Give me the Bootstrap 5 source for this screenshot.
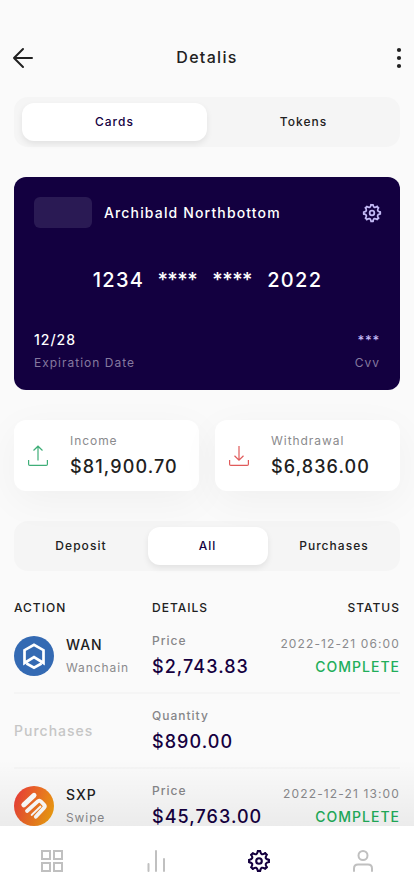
<!DOCTYPE html>
<html lang="en">
<head>
<meta charset="utf-8">
<meta name="viewport" content="width=device-width, initial-scale=1">
<title>Detalis</title>
<link href="https://cdn.jsdelivr.net/npm/bootstrap@5.3.0/dist/css/bootstrap.min.css" rel="stylesheet">
<style>
:root{--ink:#212121;--brand:#15003f;--muted-ink:#8a8a8d;--ok:#22ae5a}
body{font-family:Inter,"Liberation Sans",sans-serif;background:#fafafa;color:var(--ink);letter-spacing:1.1px;font-weight:500;overflow:hidden;height:896px}
.screen{height:826px;overflow:hidden;padding:38px 14px 0;position:relative}
.topbar{height:40px;margin:0 -2px 19px -2px}
.topbar h1{font-size:16px;line-height:20px;font-weight:500;letter-spacing:1.3px;padding-bottom:2px}
.topbar .side{width:24px;height:24px;line-height:0}
.seg{background:#f5f5f5;border-radius:14px;height:49.5px;margin-bottom:-.5px;padding:6px 4px 5px 8px}
.seg .nav-link{font-size:12px;line-height:15px;padding:11px 0 12px;color:var(--ink);border-radius:12px;height:38px;text-align:center;letter-spacing:1.05px}
.seg .nav-link.active{background:#fff;color:var(--brand);box-shadow:0 3px 6px rgba(0,0,0,.08)}
.seg-two{column-gap:4px;flex-wrap:nowrap}
.seg-three{margin-top:30px;padding-left:7px;padding-right:6px}
.seg-three .nav-link{width:120px}
.pay-card{background:#130040;border-radius:12px;height:213px;padding:20px 20px 19px;color:#fff;margin-top:31px}
.chip{width:58px;height:31px;border-radius:6px;background:#2a1a54}
.holder{font-size:14px;line-height:18px;letter-spacing:1.15px}
.card-gear{margin-right:-2px;color:#c3b9f5}
.digits{font-size:20px;line-height:24px;white-space:pre;margin-top:40px;padding-left:1px;letter-spacing:1.3px}
.digits span{letter-spacing:-.5px;margin-right:2px}
.foot-label{color:#85799f;font-weight:400;margin-top:6px}
.f14.stars{color:#c3b9f5;letter-spacing:.7px;font-size:13px}
.stats{margin-top:30px}
.stat{background:#fff;border-radius:12px;height:71px;padding:13px 14px 0;box-shadow:0 10px 40px rgba(0,0,0,.045);flex:1 1 0}
.stat svg{margin-top:12px;margin-right:22px}
.f12{font-size:12px;line-height:16px;letter-spacing:1px}
.f14{font-size:14px;line-height:18px;letter-spacing:1px}
.f18{font-size:18px;line-height:22px;letter-spacing:1.12px}
.stat .f18{margin-top:7px}
.soft{color:var(--muted-ink);font-weight:400}
.stat .soft{letter-spacing:.95px}
.list-head{margin-top:30px;margin-bottom:3px}
.tx{height:75px;border-bottom:2px solid #f5f5f5}
.col-a{width:138px}
.coin{margin-top:17px;margin-right:12px}
.coin-text{padding-top:17px}
.coin-text .f12{margin-top:6px;letter-spacing:.9px}
.amount{padding-top:14px}
.amount .soft{font-weight:500;color:#868689}
.amount .f18{margin-top:7px;letter-spacing:1.06px}
.when{padding-top:17px}
.when .f12{letter-spacing:1.13px}
.when .f14{margin-top:6px}
.ghost{padding-top:28px;color:#c6c6c6}
.ok{color:var(--ok)}
.brand{color:var(--brand)}
.fade-up{position:absolute;left:0;right:0;bottom:0;height:66px;background:linear-gradient(rgba(0,0,0,0),rgba(0,0,0,.06))}
.dock{height:70px;background:#fff;padding:23px 39px 0 40px}
.dock a{width:24px;height:24px;line-height:0}
</style>
</head>
<body>
<svg width="0" height="0" class="position-absolute">
<defs>
<path id="tooth" d="M-1.100-9.900H1.100C2-6.300 3.150-5.870 6.220-7.780"/>
<g id="gear" fill="none" stroke="currentColor" stroke-width="2.100" stroke-linecap="round">
<use href="#tooth"/><use href="#tooth" transform="rotate(45)"/><use href="#tooth" transform="rotate(90)"/><use href="#tooth" transform="rotate(135)"/><use href="#tooth" transform="rotate(180)"/><use href="#tooth" transform="rotate(225)"/><use href="#tooth" transform="rotate(270)"/><use href="#tooth" transform="rotate(315)"/>
<circle r="2.800"/>
</g>
</defs>
</svg>
<main class="screen">
<header class="topbar d-flex align-items-center justify-content-between">
<div class="side"><svg width="24" height="24" viewBox="0 0 24 24" fill="none" stroke="#212121" stroke-width="2" stroke-linecap="round" stroke-linejoin="round"><path d="M20 12H2M11 3L2 12l9 9"/></svg></div>
<h1 class="m-0">Detalis</h1>
<div class="side text-end"><svg width="6" height="24" viewBox="0 0 6 24" fill="#212121"><circle cx="3" cy="4" r="2.100"/><circle cx="3" cy="12" r="2.100"/><circle cx="3" cy="20" r="2.100"/></svg></div>
</header>
<nav class="seg seg-two nav nav-pills nav-justified">
<a class="nav-link active">Cards</a><a class="nav-link">Tokens</a>
</nav>
<section class="pay-card d-flex flex-column">
<div class="d-flex align-items-center">
<div class="chip me-2"></div><div class="holder ms-1">Archibald Northbottom</div>
<svg class="card-gear ms-auto" width="20" height="20" viewBox="-12 -12 24 24"><use href="#gear"/></svg>
</div>
<div class="digits text-center">1234  <span>****</span>  <span>****</span>  2022</div>
<div class="d-flex justify-content-between mt-auto">
<div><div class="f14">12/28</div><div class="f12 foot-label">Expiration Date</div></div>
<div class="text-end"><div class="f14 stars">***</div><div class="f12 foot-label">Cvv</div></div>
</div>
</section>
<section class="stats d-flex gap-3">
<div class="stat d-flex">
<svg width="20" height="23" viewBox="0 0 20 23" fill="none" stroke="#3fae78" stroke-width="1.200"><path d="M.6 15v4.200q0 1.200 1.200 1.200h16.400q1.200 0 1.200-1.200V15M10 15.500V1.500M5.500 5.500L10 1.200l4.500 4.300"/></svg>
<div><div class="f12 soft">Income</div><div class="f18">$81,900.70</div></div>
</div>
<div class="stat d-flex">
<svg width="20" height="23" viewBox="0 0 20 23" fill="none" stroke="#e05a5a" stroke-width="1.200"><path d="M.6 15v4.200q0 1.200 1.200 1.200h16.400q1.200 0 1.200-1.200V15M10 1v14M5.500 10.800L10 15.100l4.500-4.300"/></svg>
<div><div class="f12 soft">Withdrawal</div><div class="f18">$6,836.00</div></div>
</div>
</section>
<nav class="seg seg-three nav nav-pills justify-content-between">
<a class="nav-link">Deposit</a><a class="nav-link active">All</a><a class="nav-link">Purchases</a>
</nav>
<section>
<div class="d-flex f12 list-head"><div class="col-a">ACTION</div><div>DETAILS</div><div class="ms-auto">STATUS</div></div>
<div class="tx d-flex">
<div class="col-a d-flex">
<svg class="coin" width="40" height="40" viewBox="0 0 40 40"><circle cx="20" cy="20" r="20" fill="#346ab3"/><path d="M10.500 27V14.200L20 8.800l9.500 5.400V27L20 21.200zM12.500 27.500L20 31.700l7.500-4.200" fill="none" stroke="#fff" stroke-width="2.700"/></svg>
<div class="coin-text"><div class="f14">WAN</div><div class="f12 soft">Wanchain</div></div>
</div>
<div class="amount"><div class="f12 soft">Price</div><div class="f18 brand">$2,743.83</div></div>
<div class="ms-auto text-end when"><div class="f12 soft">2022-12-21 06:00</div><div class="f14 ok">COMPLETE</div></div>
</div>
<div class="tx d-flex">
<div class="col-a f14 ghost">Purchases</div>
<div class="amount"><div class="f12 soft">Quantity</div><div class="f18 brand">$890.00</div></div>
</div>
<div class="tx d-flex">
<div class="col-a d-flex">
<svg class="coin" width="40" height="40" viewBox="0 0 40 40"><defs><linearGradient id="sx" x1="0" y1=".3" x2="1" y2=".7"><stop offset="0" stop-color="#ec4038"/><stop offset="1" stop-color="#f0a010"/></linearGradient></defs><circle cx="20" cy="20" r="20" fill="url(#sx)"/><g fill="none" stroke="#fff" stroke-linecap="round" stroke-linejoin="round"><path d="M20 9.300L9.800 18.800" stroke-width="5"/><path d="M13 25L24 15.200q1.600-1.200 3 .3l3 3.100q1.600 1.700 0 3.300L21.800 30.800" stroke-width="3.800"/><path d="M17.600 29L26.500 20.500" stroke-width="1.800"/></g></svg>
<div class="coin-text"><div class="f14">SXP</div><div class="f12 soft">Swipe</div></div>
</div>
<div class="amount"><div class="f12 soft">Price</div><div class="f18 brand">$45,763.00</div></div>
<div class="ms-auto text-end when"><div class="f12 soft">2022-12-21 13:00</div><div class="f14 ok">COMPLETE</div></div>
</div>
</section>
<div class="fade-up"></div>
</main>
<nav class="dock d-flex justify-content-between">
<a><svg width="24" height="24" viewBox="0 0 24 24" fill="none" stroke="#c0c0c0" stroke-width="2"><path d="M2 2h8v8H2zM14 2h8v8h-8zM2 14h8v8H2zM14 14h8v8h-8z"/></svg></a>
<a><svg width="24" height="24" viewBox="0 0 24 24" stroke="#c0c0c0" stroke-width="2" stroke-linecap="round"><path d="M4.500 15v7M12 2v20M20 10v12"/></svg></a>
<a><svg width="24" height="24" viewBox="-12 -12 24 24" color="#15003f"><use href="#gear"/></svg></a>
<a><svg width="24" height="24" viewBox="0 0 24 24" fill="none" stroke="#c0c0c0" stroke-width="2" stroke-linecap="round"><circle cx="12" cy="6.500" r="4.500"/><path d="M3 22v-2.500q0-4 4-4h10q4 0 4 4v2.500"/></svg></a>
</nav>
<script src="https://cdn.jsdelivr.net/npm/bootstrap@5.3.0/dist/js/bootstrap.bundle.min.js"></script>
</body>
</html>
